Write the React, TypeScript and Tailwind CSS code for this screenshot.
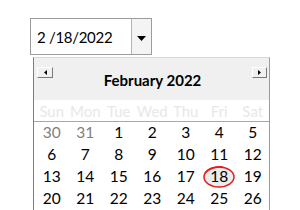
const font = "font-['Lato','Liberation_Sans',sans-serif]";

const weeks: { d: number; muted?: boolean }[][] = [
  [{ d: 30, muted: true }, { d: 31, muted: true }, { d: 1 }, { d: 2 }, { d: 3 }, { d: 4 }, { d: 5 }],
  [{ d: 6 }, { d: 7 }, { d: 8 }, { d: 9 }, { d: 10 }, { d: 11 }, { d: 12 }],
  [{ d: 13 }, { d: 14 }, { d: 15 }, { d: 16 }, { d: 17 }, { d: 18 }, { d: 19 }],
  [{ d: 20 }, { d: 21 }, { d: 22 }, { d: 23 }, { d: 24 }, { d: 25 }, { d: 26 }],
];

const dayNames = ["Sun", "Mon", "Tue", "Wed", "Thu", "Fri", "Sat"];

function NavButton({ dir, className }: { dir: "left" | "right"; className?: string }) {
  return (
    <div
      className={
        "flex items-center justify-center border-t border-l border-t-white border-l-white border-r border-b border-r-[#7a7a7a] border-b-[#7a7a7a] bg-[#f0f0f0] " +
        (className ?? "")
      }
    >
      <svg width="3" height="5" viewBox="0 0 3 5">
        {dir === "left" ? <path d="M3 0 L0 2.5 L3 5 Z" fill="#000" /> : <path d="M0 0 L3 2.5 L0 5 Z" fill="#000" />}
      </svg>
    </div>
  );
}

export default function App() {
  return (
    <div className={"h-[210px] w-[300px] overflow-hidden bg-white pl-[30px] pt-[18px] " + font}>
      {/* date box */}
      <div className="flex h-[37px] w-[122px] border border-[#9c9c9c]">
        <div className="flex flex-1 items-center pl-[6px] pt-[1px] text-[15px] leading-none tracking-[-0.3px] text-black">
          2 /18/2022
        </div>
        <div className="flex w-[20px] items-center justify-center border-l border-[#b4b4b4] bg-[#f4f4f4]">
          <svg width="9" height="5" viewBox="0 0 9 5" className="mt-[3px]">
            <path d="M0 0 H9 L4.5 5 Z" fill="#000" />
          </svg>
        </div>
      </div>

      {/* calendar */}
      <div className="ml-[3px] mt-[2px] w-[237px] border-l border-r border-t border-l-[#7d7d7d] border-r-[#9c9c9c] border-t-[#d8d8d8] bg-white">
        <div className="flex h-[42px] items-start bg-[#f0f0f0] pl-[3px] pr-[2px] pt-[9px]">
          <NavButton dir="left" className="h-[11px] w-[16px]" />
          <div className="mt-[3px] flex-1 text-center text-[15px] font-bold leading-[20px] text-black">
            February 2022
          </div>
          <NavButton dir="right" className="h-[11px] w-[15px]" />
        </div>

        <div className="grid h-[22px] grid-cols-[repeat(7,33.5px)] items-center border-b border-[#a8a8a8] pl-[1px] pt-[2px] text-[15px] leading-none text-[#e8e8e8]">
          {dayNames.map((n) => (
            <div key={n} className="text-center">
              {n}
            </div>
          ))}
        </div>

        <div className="pl-[1px]">
          {weeks.map((week, i) => (
            <div key={i} className="grid h-[22px] grid-cols-[repeat(7,33.5px)] items-center text-[15.5px] leading-none">
              {week.map((c) => (
                <div
                  key={c.d}
                  className={"relative text-center " + (c.muted ? "text-[#7f7f7f]" : "text-black")}
                >
                  {c.d === 18 && (
                    <svg
                      width="40"
                      height="28"
                      viewBox="0 0 40 28"
                      className="absolute left-1/2 top-1/2 -ml-[20px] -mt-[15px]"
                    >
                      <ellipse cx="20" cy="15" rx="15" ry="10" fill="#ececec" stroke="#e0201c" strokeWidth="1.5" />
                      <path d="M6 11 Q12 4 24 5" fill="none" stroke="#e0201c" strokeWidth="1.5" />
                    </svg>
                  )}
                  <span className="relative">{c.d}</span>
                </div>
              ))}
            </div>
          ))}
        </div>
      </div>
    </div>
  );
}
